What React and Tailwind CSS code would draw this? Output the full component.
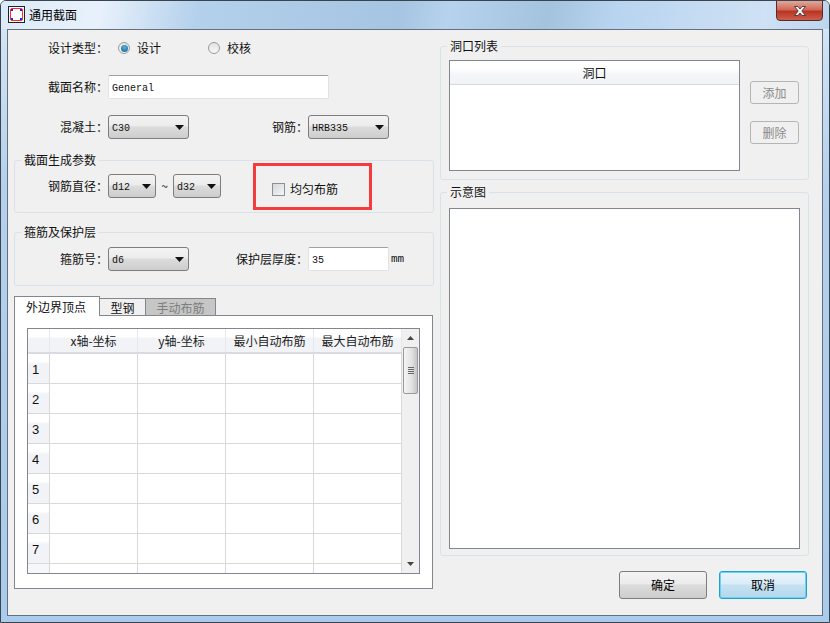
const mono = "font-['Liberation_Mono','Noto_Sans_CJK_SC',monospace] text-[10px]"

const Arrow = () => (
    <svg width="9" height="5" viewBox="0 0 9 5" className="shrink-0">
        <path d="M0 0H9L4.5 5Z" fill="#111" />
    </svg>
)

const Combo = ({ value, width }) => (
    <div className={`${width} h-[24px] shrink-0 flex items-center justify-between pl-[3px] pr-[4px] border border-[#7d7d7d] rounded-[3px] bg-[linear-gradient(#f3f3f3,#ececec_45%,#dcdcdc_50%,#cdcdcd)] ${mono}`}>
        <span className="pt-[2px]">{value}</span>
        <Arrow />
    </div>
)

const Label = ({ children }) => (
    <div className="w-[94px] shrink-0 text-right">{children}</div>
)

const Group = ({ title, className, children }) => (
    <div className={`relative border border-[#d9e1e9] rounded-[3px] ${className}`}>
        <span className="absolute left-[6px] top-[-9px] px-[3px] bg-[#f0f0f0] leading-[16px]">{title}</span>
        {children}
    </div>
)

const Radio = ({ checked }) => (
    <span className="w-[12px] h-[12px] shrink-0 rounded-full border border-[#9a9a9a] bg-[linear-gradient(#e2e2e2,#f8f8f8)] flex items-center justify-center">
        {checked && <span className="w-[7px] h-[7px] rounded-full bg-[radial-gradient(circle_at_50%_35%,#5ab4e0,#0f5a8c)]" />}
    </span>
)

const SmallButton = ({ children }) => (
    <div className="w-[49px] h-[23px] flex items-center justify-center border border-[#b5b5b5] rounded-[3px] text-[#8a8a8a]">{children}</div>
)

const columns = ['x轴-坐标', 'y轴-坐标', '最小自动布筋', '最大自动布筋']
const rows = [1, 2, 3, 4, 5, 6, 7]

const DataTable = () => (
    <div className="flex mx-[12px] mt-[12px] h-[246px] border border-[#82878f] bg-white overflow-hidden">
        <div className="w-[374px] shrink-0">
            <div className="flex h-[25px] border-b-2 border-[#d8dbe0] bg-[linear-gradient(#ffffff,#ffffff_35%,#f1f3f6_40%,#f1f3f6)]">
                <div className="w-[22px] shrink-0 border-r border-[#e6e8eb]" />
                {columns.map((c) => (
                    <div key={c} className="w-[88px] shrink-0 text-center leading-[24px] border-r border-[#e6e8eb] text-[#222]">{c}</div>
                ))}
            </div>
            {rows.map((r) => (
                <div key={r} className="flex h-[30px] border-b border-[#d9d9d9]">
                    <div className="w-[22px] shrink-0 pl-[4px] text-[13px] leading-[32px] font-['Liberation_Sans',sans-serif] bg-[linear-gradient(#ffffff,#ffffff_25%,#f1f3f6_35%,#f1f3f6)] border-r border-[#d9d9d9]">{r}</div>
                    {columns.map((c) => (
                        <div key={c} className="w-[88px] shrink-0 border-r border-[#d9d9d9]" />
                    ))}
                </div>
            ))}
            <div className="flex h-[11px]">
                <div className="w-[22px] shrink-0 bg-[#f6f7f9] border-r border-[#d9d9d9]" />
                {columns.map((c) => (
                    <div key={c} className="w-[88px] shrink-0 border-r border-[#d9d9d9]" />
                ))}
            </div>
        </div>
        <div className="flex-1 flex flex-col items-center bg-[#f0f0f0]">
            <div className="h-[18px] flex items-center">
                <svg width="7" height="4" viewBox="0 0 7 4"><path d="M3.5 0L7 4H0Z" fill="#444" /></svg>
            </div>
            <div className="w-[15px] h-[47px] flex flex-col items-center justify-center gap-[1px] border border-[#9a9a9a] rounded-[2px] bg-[linear-gradient(90deg,#f4f4f4,#e2e2e2_60%,#c4c4c4)]">
                <span className="w-[6px] h-[1px] bg-[#666]" />
                <span className="w-[6px] h-[1px] bg-[#666]" />
                <span className="w-[6px] h-[1px] bg-[#666]" />
                <span className="w-[6px] h-[1px] bg-[#666]" />
            </div>
            <div className="flex-1" />
            <div className="h-[18px] flex items-center">
                <svg width="7" height="4" viewBox="0 0 7 4"><path d="M0 0H7L3.5 4Z" fill="#444" /></svg>
            </div>
        </div>
    </div>
)

const App = () => {
    return (
        <div className="relative w-[830px] h-[623px] flex flex-col overflow-hidden rounded-t-[6px] border border-[#3a444e] px-[6px] pb-[6px] bg-[linear-gradient(#d8e8f7,#b4d0ec_30%,#a9cbec)] text-[12px] text-[#111] font-['Noto_Sans_CJK_SC',sans-serif]">
            <div className="relative h-[28px] shrink-0 -mx-[6px] flex items-center gap-[4px] pl-[7px] pb-[1px] bg-[linear-gradient(100deg,#dcebf9_0,#e8f1fb_12%,#b3d0ec_24%,#a6c5e2_48%,#b6d2ee_54%,#a4c3de_66%,#b8d4f0_74%,#cfe1f4_92%,#bcd5ee)]">
                <svg width="17" height="17" viewBox="0 0 17 17">
                    <rect x="0.5" y="0.5" width="16" height="16" fill="#fff" stroke="#222" />
                    <rect x="2.5" y="2.5" width="12" height="12" rx="1.5" fill="#fff" stroke="#ff2a2a" />
                    <rect x="3" y="3" width="2" height="2" fill="#2020ff" />
                    <rect x="12" y="3" width="2" height="2" fill="#2020ff" />
                    <rect x="3" y="12" width="2" height="2" fill="#2020ff" />
                    <rect x="12" y="12" width="2" height="2" fill="#2020ff" />
                </svg>
                <span className="leading-[17px] text-black -mt-[1px]">通用截面</span>
                <div className="absolute right-[6px] top-[-1px] w-[47px] h-[21px] flex items-center justify-center rounded-b-[4px] border border-[#5a2a28] bg-[linear-gradient(#e0a89c,#cf6a58_45%,#b93423_55%,#c9604c)]">
                    <svg width="16" height="12" viewBox="0 0 16 12">
                        <path d="M2.5 1.5H6L8 4L10 1.5H13.5L9.8 6L13.5 10.5H10L8 8L6 10.5H2.5L6.2 6Z" fill="#f4f4f4" stroke="#5c3a38" strokeWidth="1" />
                    </svg>
                </div>
            </div>

            <div className="flex-1 flex gap-[6px] pl-[6px] border border-[#66707c] bg-[#f0f0f0]">
                <div className="w-[420px] shrink-0 flex flex-col">
                    <div className="flex items-center h-[20px] mt-[8px]">
                        <Label>设计类型：</Label>
                        <span className="ml-[10px]"><Radio checked /></span>
                        <span className="ml-[7px]">设计</span>
                        <span className="ml-[47px]"><Radio /></span>
                        <span className="ml-[7px]">校核</span>
                    </div>
                    <div className="flex items-center h-[24px] mt-[17px]">
                        <Label>截面名称：</Label>
                        <div className={`w-[221px] h-[24px] pl-[3px] leading-[25px] bg-white border border-[#dfe3e8] border-t-[#a0a0a0] rounded-[2px] ${mono}`}>General</div>
                    </div>
                    <div className="flex items-center h-[24px] mt-[16px]">
                        <Label>混凝土：</Label>
                        <Combo value="C30" width="w-[81px]" />
                        <div className="ml-[83px] w-[36px] shrink-0">钢筋：</div>
                        <Combo value="HRB335" width="w-[81px]" />
                    </div>

                    <Group title="截面生成参数" className="h-[53px] mt-[21px]">
                        <div className="flex items-center h-[24px] mt-[13px]">
                            <div className="w-[93px] shrink-0 text-right">钢筋直径：</div>
                            <Combo value="d12" width="w-[48px]" />
                            <span className="w-[17px] text-center">~</span>
                            <Combo value="d32" width="w-[48px]" />
                            <span className="ml-[51px] mt-[6px] w-[13px] h-[13px] border border-[#8e8f8f] bg-[linear-gradient(135deg,#d4d8dd,#f4f5f6)]" />
                            <span className="ml-[5px] mt-[6px]">均匀布筋</span>
                        </div>
                        <div className="absolute left-[238px] top-[2px] w-[119px] h-[47px] border-[3px] border-[#f53b3b]" />
                    </Group>

                    <Group title="箍筋及保护层" className="h-[54px] mt-[19px]">
                        <div className="flex items-center h-[24px] mt-[14px]">
                            <div className="w-[93px] shrink-0 text-right">箍筋号：</div>
                            <Combo value="d6" width="w-[81px]" />
                            <div className="w-[119px] shrink-0 text-right">保护层厚度：</div>
                            <div className={`w-[81px] h-[24px] pl-[3px] leading-[25px] bg-white border border-[#dfe3e8] border-t-[#a0a0a0] rounded-[2px] ${mono}`}>35</div>
                            <span className="ml-[2px] text-[11px] font-['Liberation_Mono',monospace]">mm</span>
                        </div>
                    </Group>

                    <div className="flex items-end h-[19px] mt-[10px]">
                        <div className="relative z-10 w-[86px] h-[20px] -mb-[1px] pl-[11px] leading-[19px] bg-white border border-b-0 border-[#82878f]">外边界顶点</div>
                        <div className="w-[46px] h-[17px] text-center leading-[17px] bg-[#f0f0f0] border-t border-r border-[#82878f]">型钢</div>
                        <div className="w-[70px] h-[17px] text-center leading-[17px] bg-[#c6c6c6] text-[#7d7d7d] border-t border-r border-[#82878f]">手动布筋</div>
                    </div>
                    <div className="w-[419px] h-[274px] border border-[#82878f] bg-white">
                        <DataTable />
                    </div>
                </div>

                <div className="w-[369px] shrink-0 flex flex-col">
                    <Group title="洞口列表" className="h-[134px] mt-[16px]">
                        <div className="flex h-[111px] mt-[13px] ml-[8px]">
                            <div className="w-[291px] h-[111px] border border-[#82878f] bg-white">
                                <div className="h-[24px] text-center leading-[23px] border-b border-[#d5d8dc] bg-[linear-gradient(#ffffff,#ffffff_30%,#f3f5f8_60%,#f1f3f6)]">洞口</div>
                            </div>
                            <div className="ml-[10px] mt-[21px] flex flex-col gap-[17px]">
                                <SmallButton>添加</SmallButton>
                                <SmallButton>删除</SmallButton>
                            </div>
                        </div>
                    </Group>
                    <Group title="示意图" className="h-[364px] mt-[12px]">
                        <div className="w-[351px] h-[341px] mt-[15px] ml-[8px] border border-[#82878f] bg-white" />
                    </Group>
                    <div className="flex justify-end gap-[12px] mt-[15px] pr-[2px]">
                        <div className="w-[88px] h-[28px] flex items-center justify-center border border-[#7d7d7d] rounded-[3px] bg-[linear-gradient(#f3f3f3,#ececec_45%,#dcdcdc_50%,#cdcdcd)] text-black">确定</div>
                        <div className="w-[88px] h-[28px] flex items-center justify-center border border-[#1f9fd6] rounded-[3px] shadow-[inset_0_0_0_1px_#6fd0f2] bg-[linear-gradient(#e9f4fb,#dcedf8_45%,#c6e2f2_50%,#b3d6ea)] text-black">取消</div>
                    </div>
                </div>
            </div>
        </div>
    )
}

export default App
